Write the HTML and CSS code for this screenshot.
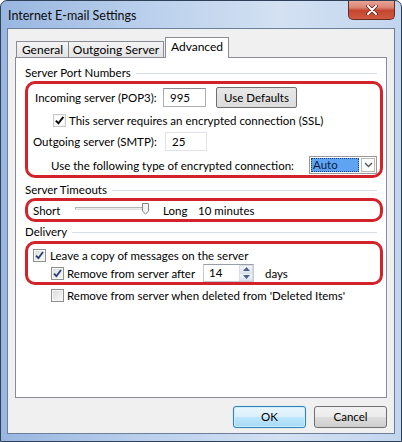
FILE: index.html
```html
<!DOCTYPE html>
<html lang="en">
<head>
    <meta charset="UTF-8">
    <meta name="viewport" content="width=device-width, initial-scale=1.0">
    <title>Internet E-mail Settings</title>
    <link rel="stylesheet" href="styles.css">
</head>
<body>
    <div class="window">
        <div class="titlebar">
            <span class="title">Internet E-mail Settings</span>
            <div class="close-btn">
                <svg width="12" height="10" viewBox="0 0 12 10">
                    <path d="M2 1 L10 9 M10 1 L2 9" stroke="#5b1a12" stroke-width="3.4" stroke-linecap="round"/>
                    <path d="M2 1 L10 9 M10 1 L2 9" stroke="#ffffff" stroke-width="2" stroke-linecap="round"/>
                </svg>
            </div>
        </div>

        <div class="client">
            <!-- tab strip -->
            <div class="tabs">
                <div class="tab tab-general">General</div>
                <div class="tab tab-outgoing">Outgoing Server</div>
                <div class="tab tab-advanced active">Advanced</div>
            </div>

            <div class="panel">
                <div class="group-head"><span>Server Port Numbers</span><div class="rule"></div></div>
                <div class="mark mark-ports">
                    <div class="row row-pop">
                        <span class="lbl lbl-pop">Incoming server (POP3):</span>
                        <div class="field field-pop">995</div>
                        <div class="btn btn-defaults">Use Defaults</div>
                    </div>
                    <div class="row row-ssl">
                        <span class="check on">
                            <svg width="11" height="11" viewBox="0 0 11 11"><path d="M1.8 5.6 L4.4 8.3 L9.4 1.8" fill="none" stroke="#111" stroke-width="2"/></svg>
                        </span>
                        <span class="check-text">This server requires an encrypted connection (SSL)</span>
                    </div>
                    <div class="row row-smtp">
                        <span class="lbl lbl-smtp">Outgoing server (SMTP):</span>
                        <div class="field field-smtp">25</div>
                    </div>
                    <div class="row row-enc">
                        <span class="lbl lbl-enc">Use the following type of encrypted connection:</span>
                        <div class="combo">
                            <span class="combo-val">Auto</span>
                            <span class="combo-arrow">
                                <svg width="9" height="6" viewBox="0 0 9 6"><path d="M1 1 L4.5 4.5 L8 1" fill="none" stroke="#555" stroke-width="1.4"/></svg>
                            </span>
                        </div>
                    </div>
                </div>

                <div class="group-head head-timeouts"><span>Server Timeouts</span><div class="rule"></div></div>
                <div class="mark mark-timeouts">
                    <div class="row row-slider">
                        <span class="lbl lbl-short">Short</span>
                        <div class="slider">
                            <div class="track"></div>
                            <svg class="thumb" width="7" height="12" viewBox="0 0 7 12"><path d="M0.5 0.5 H6.5 V8 L3.5 11.2 L0.5 8 Z" fill="#f3f3f3" stroke="#888"/></svg>
                        </div>
                        <span class="lbl lbl-long">Long</span>
                        <span>10 minutes</span>
                    </div>
                </div>

                <div class="group-head head-delivery"><span>Delivery</span><div class="rule"></div></div>
                <div class="mark mark-delivery">
                    <div class="row row-leave">
                        <span class="check on">
                            <svg width="11" height="11" viewBox="0 0 11 11"><path d="M2 5.6 L4.4 8.2 L9 2" fill="none" stroke="#2a3c75" stroke-width="1.8"/></svg>
                        </span>
                        <span class="check-text">Leave a copy of messages on the server</span>
                    </div>
                    <div class="row row-remove">
                        <span class="check on">
                            <svg width="11" height="11" viewBox="0 0 11 11"><path d="M2 5.6 L4.4 8.2 L9 2" fill="none" stroke="#2a3c75" stroke-width="1.8"/></svg>
                        </span>
                        <span class="check-text lbl-after">Remove from server after</span>
                        <div class="spin">
                            <span class="spin-val">14</span>
                            <span class="spin-btns">
                                <span class="spin-up"><svg width="7" height="4" viewBox="0 0 7 4"><path d="M0 4 L3.5 0 L7 4 Z" fill="#4d6185"/></svg></span>
                                <span class="spin-down"><svg width="7" height="4" viewBox="0 0 7 4"><path d="M0 0 L3.5 4 L7 0 Z" fill="#4d6185"/></svg></span>
                            </span>
                        </div>
                        <span class="days">days</span>
                    </div>
                </div>
                <div class="row row-deleted">
                    <span class="check"></span>
                    <span class="check-text">Remove from server when deleted from 'Deleted Items'</span>
                </div>
            </div>

            <div class="actions">
                <div class="btn btn-ok">OK</div>
                <div class="btn btn-cancel">Cancel</div>
            </div>
        </div>
    </div>
</body>
</html>
```

FILE: styles.css
```css
body {
    margin: 0;
    font-family: Lato, "Noto Sans", sans-serif;
    font-size: 11.5px;
    color: #000;
}
.window {
    width: 402px;
    height: 442px;
    box-sizing: border-box;
    border: 1px solid #2f4158;
    border-radius: 7px 7px 0 0;
    background: linear-gradient(to right, #98b6e0 0%, #b9cfec 35%, #d3e1f2 70%, #c2d5ee 100%);
    display: flex;
    flex-direction: column;
    overflow: hidden;
}
.titlebar {
    height: 27px;
    display: flex;
    align-items: flex-start;
    flex: none;
}
.title {
    margin: 7px 0 0 7px;
    line-height: 15px;
    font-size: 12.5px;
    color: #0c0c0c;
}
.close-btn {
    margin: -1px 6px 0 auto;
    width: 47px;
    height: 20px;
    box-sizing: border-box;
    border: 1px solid #6b2a22;
    border-top: none;
    border-radius: 0 0 5px 5px;
    background: linear-gradient(#e9a89a, #d98473 40%, #c5462f 55%, #cf5a41 100%);
    display: flex;
    align-items: center;
    justify-content: center;
}
.client {
    margin: 0 6px 7px;
    height: 406px;
    box-sizing: border-box;
    border: 1px solid #6a7f99;
    background: #f0f0f0;
    padding: 8px 7px 0 7px;
}

/* tabs */
.tabs {
    display: flex;
    align-items: flex-end;
    height: 20px;
    margin-left: 1px;
}
.tab {
    height: 16px;
    box-sizing: border-box;
    border: 1px solid #898c95;
    border-bottom: none;
    background: linear-gradient(#f4f4f4, #e3e3e3);
    text-align: center;
    line-height: 15px;
    font-size: 12px;
}
.tab-general {
    width: 53px;
}
.tab-outgoing {
    width: 96px;
    margin-left: -1px;
}
.tab.active {
    width: 64px;
    height: 21px;
    margin-left: 1px;
    margin-bottom: -1px;
    background: #fff;
    line-height: 18px;
    position: relative;
    z-index: 1;
}
.panel {
    width: 372px;
    height: 341px;
    box-sizing: border-box;
    border: 1px solid #898c95;
    background: #fff;
    padding: 0 3px 0 9px;
}

/* group headers */
.group-head {
    display: flex;
    align-items: center;
    height: 16px;
    line-height: 16px;
    margin-top: 7px;
}
.group-head .rule {
    flex: 1;
    height: 1px;
    background: #d5dfe5;
    margin: 0 6px 0 5px;
}
.head-timeouts {
    margin-top: 4px;
}
.head-delivery {
    margin-top: 2px;
}

/* red highlight frames */
.mark {
    border: 3px solid #d2232b;
    border-radius: 10px;
}
.mark-ports {
    padding-bottom: 1px;
}
.mark-timeouts {
    height: 24px;
    box-sizing: border-box;
}
.mark-delivery {
    margin-top: 1px;
    height: 44px;
    box-sizing: border-box;
}

.row {
    display: flex;
    align-items: center;
}
.lbl {
    flex: none;
}
.row-pop {
    height: 20px;
    margin-top: 3px;
}
.lbl-pop {
    margin-left: 7px;
    width: 128px;
}
.field {
    box-sizing: border-box;
    height: 19px;
    border: 1px solid #abadb3;
    border-top-color: #8b8d93;
    background: #fff;
    padding-left: 6px;
    line-height: 17px;
}
.field-pop {
    width: 43px;
}
.field-smtp {
    width: 42px;
    border-color: #e2e3ea;
}
.btn {
    box-sizing: border-box;
    border: 1px solid #707070;
    border-radius: 3px;
    text-align: center;
    background: linear-gradient(#f2f2f2, #ebebeb 50%, #dddddd 50%, #cfcfcf);
}
.btn-defaults {
    margin-left: 10px;
    width: 81px;
    height: 21px;
    line-height: 19px;
    border-radius: 2px;
    background: linear-gradient(#e8e8e8, #dcdcdc);
}
.row-ssl {
    height: 13px;
    margin-top: 7px;
    padding-left: 25px;
}
.row-smtp {
    height: 19px;
    margin-top: 5px;
}
.lbl-smtp {
    margin-left: 5px;
    width: 132px;
}
.row-enc {
    height: 18px;
    margin-top: 5px;
}
.lbl-enc {
    margin-left: 23px;
    width: 258px;
}

/* checkboxes */
.check {
    flex: none;
    width: 13px;
    height: 13px;
    box-sizing: border-box;
    border: 1px solid #8e8f8f;
    background: linear-gradient(135deg, #dadbdc, #fafafa);
    box-shadow: inset 0 0 0 1px #f6f6f6;
    display: flex;
    align-items: center;
    justify-content: center;
}
.row-ssl .check {
    border-color: #c9c9c9;
    background: #fff;
}
.check-text {
    margin-left: 3px;
    white-space: nowrap;
}

/* combo box */
.combo {
    width: 68px;
    height: 18px;
    box-sizing: border-box;
    border: 1px solid #9a9a9a;
    padding: 1px;
    display: flex;
    background: #fff;
}
.combo-val {
    width: 46px;
    background: #5fa4f3;
    outline: 1px dotted #1b3f7a;
    outline-offset: -1px;
    padding-left: 2px;
    line-height: 14px;
    color: #0b1d3f;
}
.combo-arrow {
    margin-left: 2px;
    flex: 1;
    border: 1px solid #b9b9b9;
    display: flex;
    align-items: center;
    justify-content: center;
}

/* slider */
.row-slider {
    height: 18px;
}
.lbl-short {
    margin-left: 5px;
    width: 42px;
}
.slider {
    position: relative;
    width: 72px;
    height: 12px;
    margin-right: 16px;
}
.track {
    margin-top: 3px;
    height: 3px;
    box-sizing: border-box;
    border: 1px solid #b4b4b4;
    border-bottom-color: #e0e0e0;
    background: #e9ecee;
}
.thumb {
    position: absolute;
    left: 67px;
    top: -1px;
}
.lbl-long {
    width: 35px;
}

/* delivery */
.row-leave {
    height: 13px;
    margin-top: 5px;
    padding-left: 5px;
}
.row-leave .check-text {
    margin-left: 4px;
}
.row-remove {
    height: 18px;
    margin-top: 2px;
    padding-left: 23px;
}
.lbl-after {
    width: 136px;
}
.spin {
    width: 51px;
    height: 18px;
    box-sizing: border-box;
    border: 1px solid #c5c9d1;
    border-top-color: #9aa0aa;
    display: flex;
    background: #fff;
}
.spin-val {
    flex: 1;
    padding-left: 5px;
    line-height: 16px;
}
.spin-btns {
    width: 14px;
    display: flex;
    flex-direction: column;
}
.spin-btns span {
    flex: 1;
    display: flex;
    align-items: center;
    justify-content: center;
    border: 1px solid #d6dde8;
    background: linear-gradient(#f4f7fb, #dde5f0);
}
.spin-down {
    border-top: none !important;
}
.days {
    margin-left: 11px;
}
.row-deleted {
    height: 13px;
    margin-top: 4px;
    padding-left: 26px;
}

/* bottom buttons */
.actions {
    display: flex;
    justify-content: flex-end;
    gap: 8px;
    margin-top: 8px;
}
.btn-ok,
.btn-cancel {
    width: 73px;
    height: 22px;
    line-height: 20px;
}
.btn-ok {
    border-color: #3c7fb1;
    background: linear-gradient(#eaf6fd, #d9f0fc 50%, #bee6fd 50%, #a7d9f5);
    box-shadow: inset 0 0 0 1px #c6f0ff, 0 0 1px #5ecbf2;
}
```
